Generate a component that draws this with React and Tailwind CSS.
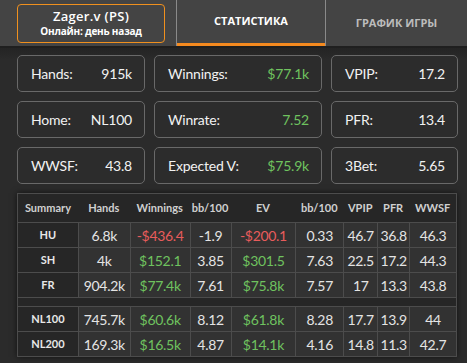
const stats = [
  [
    { label: 'Hands:', value: '915k' },
    { label: 'Winnings:', value: '$77.1k', green: true },
    { label: 'VPIP:', value: '17.2' },
  ],
  [
    { label: 'Home:', value: 'NL100' },
    { label: 'Winrate:', value: '7.52', green: true },
    { label: 'PFR:', value: '13.4' },
  ],
  [
    { label: 'WWSF:', value: '43.8' },
    { label: 'Expected V:', value: '$75.9k', green: true },
    { label: '3Bet:', value: '5.65' },
  ],
];

const cols = [
  { name: 'Summary', w: 'w-[60px]' },
  { name: 'Hands', w: 'w-[52px]' },
  { name: 'Winnings', w: 'w-[60px]' },
  { name: 'bb/100', w: 'w-[41px]' },
  { name: 'EV', w: 'w-[65px]' },
  { name: 'bb/100', w: 'w-[48px]' },
  { name: 'VPIP', w: 'w-[34px]' },
  { name: 'PFR', w: 'w-[32px]' },
  { name: 'WWSF', w: 'w-[47px]' },
];

const groups = [
  [
    ['HU', '6.8k', '-$436.4', '-1.9', '-$200.1', '0.33', '46.7', '36.8', '46.3'],
    ['SH', '4k', '$152.1', '3.85', '$301.5', '7.63', '22.5', '17.2', '44.3'],
    ['FR', '904.2k', '$77.4k', '7.61', '$75.8k', '7.57', '17', '13.3', '43.8'],
  ],
  [
    ['NL100', '745.7k', '$60.6k', '8.12', '$61.8k', '8.28', '17.7', '13.9', '44'],
    ['NL200', '169.3k', '$16.5k', '4.87', '$14.1k', '4.16', '14.8', '11.3', '42.7'],
  ],
];

const money = (v) =>
  v.startsWith('-$') ? 'text-[#e85c5c]' : v.startsWith('$') ? 'text-[#6fc25f]' : 'text-[#e4e4e4]';

const StatCard = ({ label, value, green, w }) => (
  <div className={`${w} h-[37px] flex items-center justify-between pl-[13px] pr-[12px] border border-[#696969] rounded-[5px] bg-[#2c2c2c]`}>
    <span className="text-[14px] text-[#f2f2f2] tracking-[-0.2px]">{label}</span>
    <span className={`text-[14px] tracking-[-0.2px] ${green ? 'text-[#6fc25f]' : 'text-[#f2f2f2]'}`}>{value}</span>
  </div>
);

const Row = ({ cells }) => (
  <div className="flex h-[25px] border-t border-[#4c4c4c]">
    {cells.map((c, i) => (
      <div
        key={i}
        className={`${cols[i].w} flex items-center justify-center ${i > 0 ? 'border-l border-[#4c4c4c] bg-[#323232] text-[14px] tracking-[-0.3px]' : 'bg-[#262626] text-[11px] font-bold text-[#e8e8e8]'} ${i > 0 ? money(c) : ''}`}
      >
        {c}
      </div>
    ))}
  </div>
);

export default function App() {
  return (
    <div className="w-[467px] h-[363px] bg-[#2b2b2b] overflow-hidden" style={{ fontFamily: 'Lato, "Open Sans", sans-serif' }}>
      {/* Header */}
      <div className="h-[48px] bg-[#444444] flex border-b-[2px] border-[#1f1f1f] font-['Open_Sans',sans-serif]">
        <div className="w-[176px] flex items-center pl-[17px]">
          <div className="w-[148px] h-[39px] border border-[#f0901e] rounded-[4px] flex flex-col items-center justify-center">
            <span className="text-[13px] font-semibold text-white leading-[16px] tracking-[0.3px]">Zager.v (PS)</span>
            <span className="text-[10px] font-bold text-white leading-[14px] tracking-[-0.2px]">Онлайн: день назад</span>
          </div>
        </div>
        <div className="w-[150px] border-l border-r border-[#8a8a8a] flex flex-col">
          <div className="flex-1 flex items-center justify-center text-[11px] font-bold text-white">СТАТИСТИКА</div>
          <div className="h-[3px] bg-[#f58a1f]" />
        </div>
        <div className="flex-1 flex items-center justify-center text-[11px] font-bold text-[#bcbcbc]">ГРАФИК ИГРЫ</div>
      </div>

      {/* Stat cards */}
      <div className="pl-[17px] pt-[7px] flex flex-col gap-[9px] bg-gradient-to-b from-[#242424] to-[#2b2b2b] to-[12px]">
        {stats.map((row, r) => (
          <div key={r} className="flex gap-[9px]">
            <StatCard {...row[0]} w="w-[128px]" />
            <StatCard {...row[1]} w="w-[168px]" />
            <StatCard {...row[2]} w="w-[127px]" />
          </div>
        ))}
      </div>

      {/* Table */}
      <div className="ml-[17px] mt-[9px] w-[440px] border border-[#4c4c4c] shadow-[0_0_6px_rgba(0,0,0,0.6)]">
        <div className="flex h-[28px] bg-[#262626]">
          {cols.map((c, i) => (
            <div key={i} className={`${c.w} flex items-center justify-center text-[11px] font-bold text-[#d0d0d0]`}>
              {c.name}
            </div>
          ))}
        </div>
        {groups[0].map((r, i) => (
          <Row key={i} cells={r} />
        ))}
        <div className="h-[9px] border-t border-[#4c4c4c] bg-[#262626]" />
        {groups[1].map((r, i) => (
          <Row key={i} cells={r} />
        ))}
      </div>
    </div>
  );
}
